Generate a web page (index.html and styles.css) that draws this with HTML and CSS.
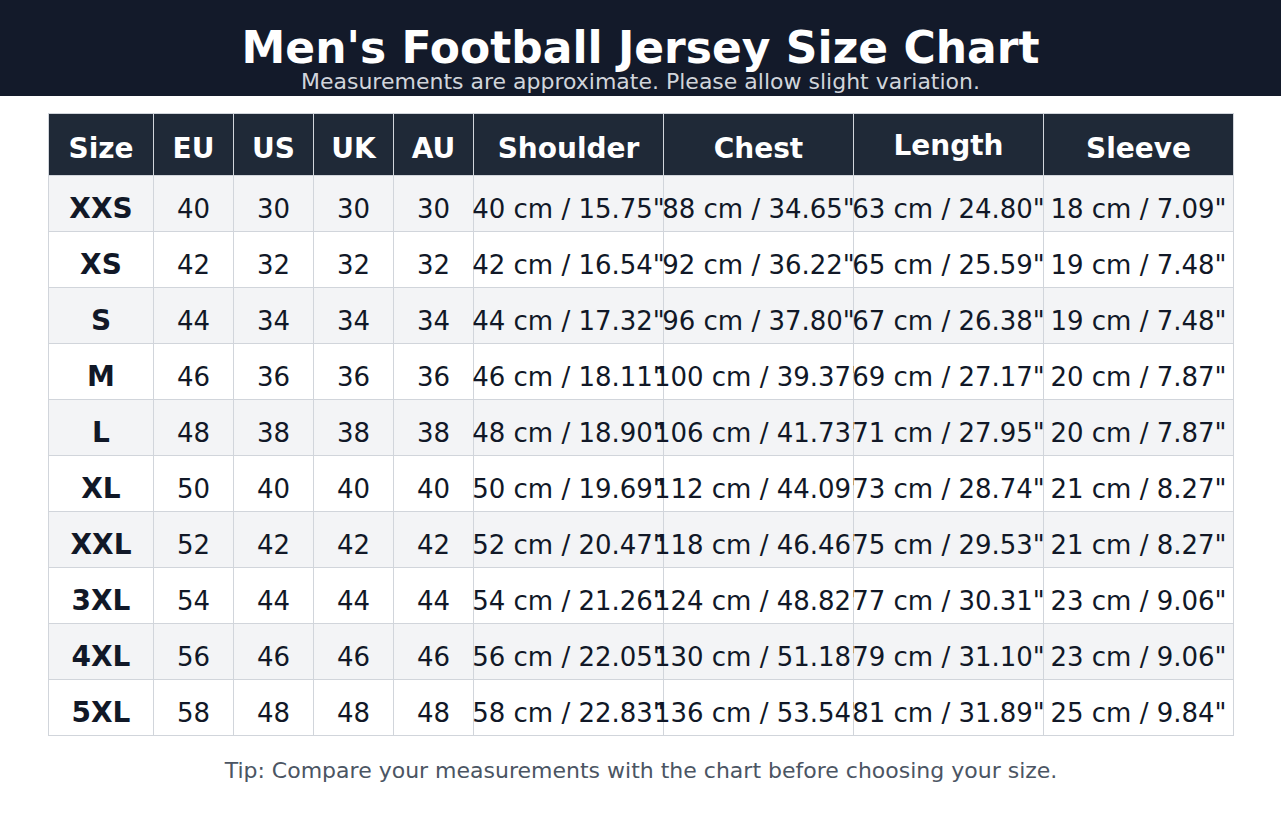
FILE: index.html
```html
<!DOCTYPE html>
<html lang="en">
<head>
<meta charset="utf-8">
<title>Men's Football Jersey Size Chart</title>
<link rel="stylesheet" href="styles.css">
</head>
<body>
<header class="banner">
  <h1 class="title">Men's Football Jersey Size Chart</h1>
  <p class="subtitle">Measurements are approximate. Please allow slight variation.</p>
</header>
<main class="content">
  <div class="chart">
    <div class="cell head">Size</div>
    <div class="cell head">EU</div>
    <div class="cell head">US</div>
    <div class="cell head">UK</div>
    <div class="cell head">AU</div>
    <div class="cell head">Shoulder</div>
    <div class="cell head">Chest</div>
    <div class="cell head head-raised">Length</div>
    <div class="cell head">Sleeve</div>

    <div class="cell size alt">XXS</div><div class="cell alt">40</div><div class="cell alt">30</div><div class="cell alt">30</div><div class="cell alt">30</div><div class="cell alt">40 cm / 15.75"</div><div class="cell alt">88 cm / 34.65"</div><div class="cell alt">63 cm / 24.80"</div><div class="cell alt">18 cm / 7.09"</div>
    <div class="cell size">XS</div><div class="cell">42</div><div class="cell">32</div><div class="cell">32</div><div class="cell">32</div><div class="cell">42 cm / 16.54"</div><div class="cell">92 cm / 36.22"</div><div class="cell">65 cm / 25.59"</div><div class="cell">19 cm / 7.48"</div>
    <div class="cell size alt">S</div><div class="cell alt">44</div><div class="cell alt">34</div><div class="cell alt">34</div><div class="cell alt">34</div><div class="cell alt">44 cm / 17.32"</div><div class="cell alt">96 cm / 37.80"</div><div class="cell alt">67 cm / 26.38"</div><div class="cell alt">19 cm / 7.48"</div>
    <div class="cell size">M</div><div class="cell">46</div><div class="cell">36</div><div class="cell">36</div><div class="cell">36</div><div class="cell">46 cm / 18.11"</div><div class="cell">100 cm / 39.37"</div><div class="cell">69 cm / 27.17"</div><div class="cell">20 cm / 7.87"</div>
    <div class="cell size alt">L</div><div class="cell alt">48</div><div class="cell alt">38</div><div class="cell alt">38</div><div class="cell alt">38</div><div class="cell alt">48 cm / 18.90"</div><div class="cell alt">106 cm / 41.73"</div><div class="cell alt">71 cm / 27.95"</div><div class="cell alt">20 cm / 7.87"</div>
    <div class="cell size">XL</div><div class="cell">50</div><div class="cell">40</div><div class="cell">40</div><div class="cell">40</div><div class="cell">50 cm / 19.69"</div><div class="cell">112 cm / 44.09"</div><div class="cell">73 cm / 28.74"</div><div class="cell">21 cm / 8.27"</div>
    <div class="cell size alt">XXL</div><div class="cell alt">52</div><div class="cell alt">42</div><div class="cell alt">42</div><div class="cell alt">42</div><div class="cell alt">52 cm / 20.47"</div><div class="cell alt">118 cm / 46.46"</div><div class="cell alt">75 cm / 29.53"</div><div class="cell alt">21 cm / 8.27"</div>
    <div class="cell size">3XL</div><div class="cell">54</div><div class="cell">44</div><div class="cell">44</div><div class="cell">44</div><div class="cell">54 cm / 21.26"</div><div class="cell">124 cm / 48.82"</div><div class="cell">77 cm / 30.31"</div><div class="cell">23 cm / 9.06"</div>
    <div class="cell size alt">4XL</div><div class="cell alt">56</div><div class="cell alt">46</div><div class="cell alt">46</div><div class="cell alt">46</div><div class="cell alt">56 cm / 22.05"</div><div class="cell alt">130 cm / 51.18"</div><div class="cell alt">79 cm / 31.10"</div><div class="cell alt">23 cm / 9.06"</div>
    <div class="cell size">5XL</div><div class="cell">58</div><div class="cell">48</div><div class="cell">48</div><div class="cell">48</div><div class="cell">58 cm / 22.83"</div><div class="cell">136 cm / 53.54"</div><div class="cell">81 cm / 31.89"</div><div class="cell">25 cm / 9.84"</div>
  </div>
  <p class="tip">Tip: Compare your measurements with the chart before choosing your size.</p>
</main>
</body>
</html>
```
FILE: styles.css
```css
* { box-sizing: border-box; }

html, body {
  margin: 0;
  padding: 0;
  background: #ffffff;
  font-family: "DejaVu Sans", "Liberation Sans", sans-serif;
  color: #111827;
}

.banner {
  background: #131a2a;
  height: 96px;
  padding-top: 26px;
  text-align: center;
}

.title {
  margin: 0;
  font-size: 44px;
  line-height: 44px;
  font-weight: bold;
  color: #ffffff;
}

.subtitle {
  margin: 1px 0 0;
  font-size: 22px;
  line-height: 22px;
  color: #d1d5db;
}

.content {
  padding: 17px 47px 0 48px;
}

.chart {
  display: grid;
  grid-template-columns: 105px 80px 80px 80px 80px 190px 190px 190px 190px;
  width: 1186px;
  border-top: 1px solid #d1d5db;
  border-left: 1px solid #d1d5db;
}

.cell {
  display: flex;
  justify-content: center;
  align-items: flex-start;
  height: 56px;
  padding-top: 20px;
  border-right: 1px solid #d1d5db;
  border-bottom: 1px solid #d1d5db;
  white-space: nowrap;
  font-size: 26px;
  line-height: 26px;
  color: #111827;
  background: #ffffff;
}

.alt { background: #f3f4f6; }

.size {
  font-weight: bold;
  font-size: 28px;
}

.head {
  height: 62px;
  padding-top: 21px;
  background: #1f2937;
  color: #ffffff;
  font-weight: bold;
  font-size: 28px;
  line-height: 28px;
}

.head-raised { padding-top: 18px; }

.tip {
  margin: 24px 0 0;
  text-align: center;
  font-size: 22px;
  line-height: 22px;
  color: #4b5563;
}
```
